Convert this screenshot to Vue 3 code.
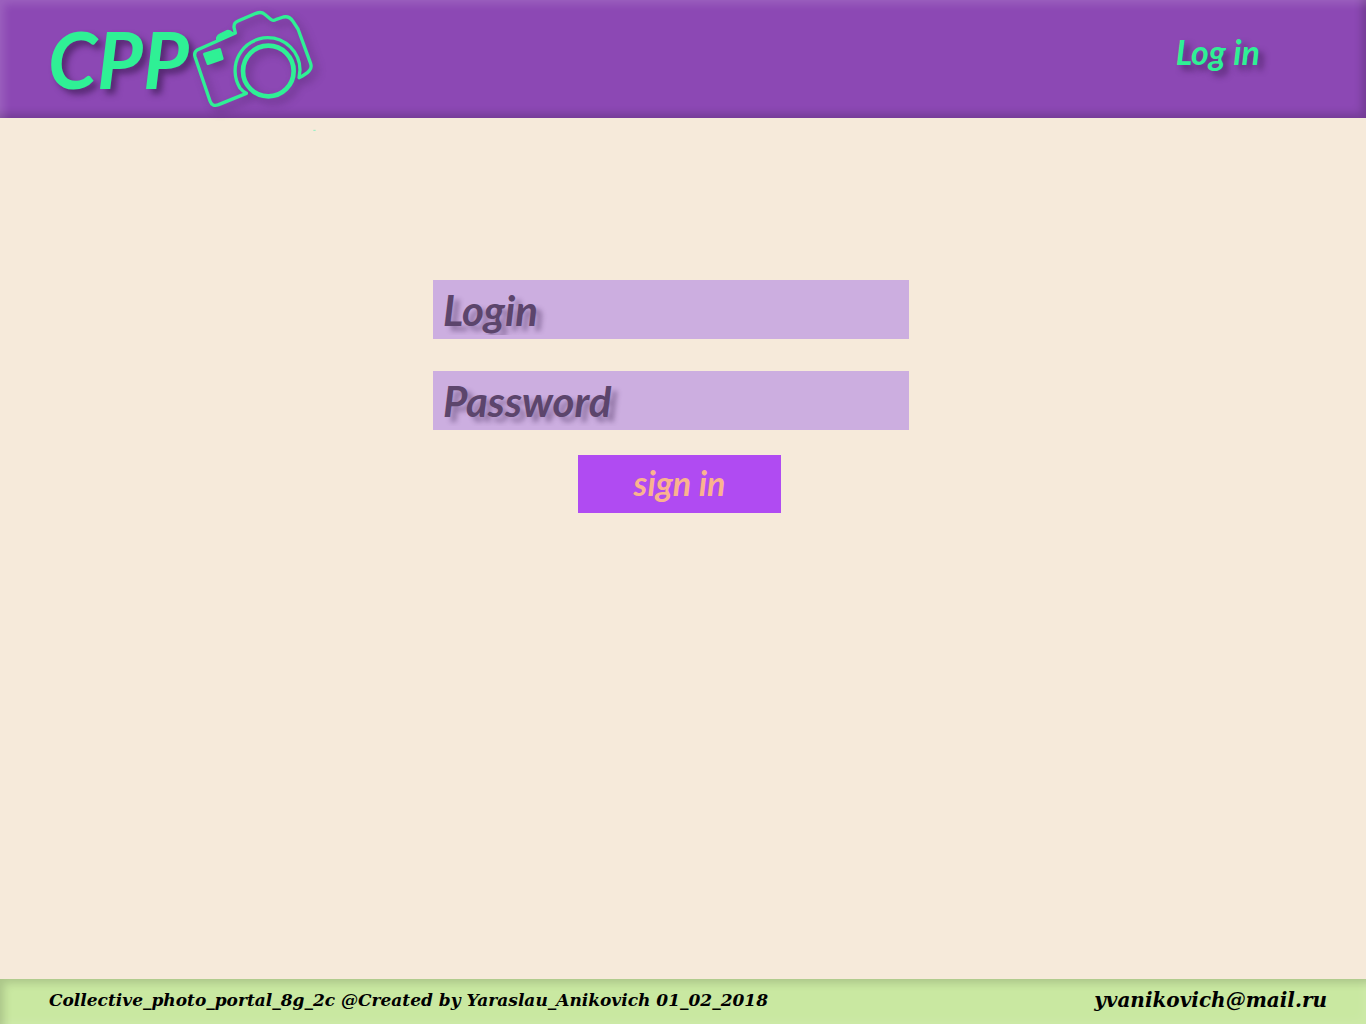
<script setup>
import { ref } from 'vue'

const login = ref('')
const password = ref('')
</script>

<template>
  <div class="page">
    <header class="header">
      <a class="brand" href="#" aria-label="CPP home">
        <span class="brand-name">CPP</span>
        <svg class="camera" viewBox="36 0 420 354" aria-hidden="true">
          <g class="camera-body">
            <g fill="none" stroke="#2ff095" stroke-linejoin="round" stroke-linecap="round">
              <path
                stroke-width="10"
                d="M199 280 L116 314 Q96 321 90 303 L45 170 Q41 156 53 149 L166 99 L162 82 Q161 68 174 63 L228 40 Q244 34 254 43 L272 58 Q279 64 289 58 L310 51 Q328 47 339 64 L354 87 L392 191 Q396 203 388 212 Q379 223 357 233 L360 210 A97 97 0 0 0 263 113 A99 99 0 0 0 180 264 Q188 274 199 280"
              />
              <circle cx="265" cy="213" r="76" stroke-width="14" />
            </g>
            <g fill="#2ff095" stroke="#2ff095" stroke-linejoin="round">
              <path stroke-width="4" d="M110 119 Q108 109 120 102 L141 92 Q148 90 158 98 Z" />
              <path stroke-width="8" d="M73 162 L119 148 L127 176 L84 191 Z" />
            </g>
          </g>
          <path stroke="#8ff0c2" stroke-width="3" d="M400 391 H407" />
        </svg>
      </a>
      <a class="login-link" href="#login">Log in</a>
    </header>

    <main class="main">
      <form id="login-form" class="form" @submit.prevent>
        <input
          id="login"
          v-model="login"
          class="field"
          type="text"
          placeholder="Login"
          aria-label="Login"
          autocomplete="username"
        />
        <input
          id="password"
          v-model="password"
          class="field"
          type="password"
          placeholder="Password"
          aria-label="Password"
          autocomplete="current-password"
        />
        <div class="actions">
          <button class="submit" type="submit">sign in</button>
        </div>
      </form>
    </main>

    <footer class="footer">
      <span class="credits">Collective_photo_portal_8g_2c @Created by Yaraslau_Anikovich 01_02_2018</span>
      <a class="email" href="mailto:yvanikovich@mail.ru">yvanikovich@mail.ru</a>
    </footer>
  </div>
</template>

<style>
body {
  margin: 0;
  background: #f6eada;
}
</style>

<style scoped>
.page {
  display: flex;
  flex-direction: column;
  min-height: 100vh;
  font-family: Lato, "Liberation Sans", sans-serif;
}

.header {
  position: relative;
  display: flex;
  align-items: center;
  justify-content: space-between;
  box-sizing: border-box;
  min-height: 118px;
  padding: 0 106px 0 48px;
  background: #8c48b4;
  box-shadow:
    inset 8px 8px 8px -4px rgba(255, 255, 255, 0.14),
    inset -8px -8px 8px -4px rgba(0, 0, 0, 0.18);
}

.brand {
  display: flex;
  align-items: center;
  gap: 4px;
  color: #2ff095;
  text-decoration: none;
}

.brand-name {
  width: 140px;
  font-size: 79px;
  font-style: italic;
  font-weight: 700;
  line-height: 118px;
  text-shadow: 5px 5px 6px rgba(50, 20, 70, 0.6);
}

.camera {
  display: block;
  width: 140px;
  height: 118px;
  overflow: visible;
}

.camera-body {
  filter: drop-shadow(14px 14px 12px rgba(50, 20, 70, 0.4));
}

.login-link {
  padding-bottom: 14px;
  color: #2ff095;
  font-size: 34px;
  font-style: italic;
  font-weight: 700;
  line-height: 40px;
  text-decoration: none;
  text-shadow: 5px 5px 6px rgba(50, 20, 70, 0.6);
}

.main {
  flex: 1;
  padding: 162px 24px 40px 0;
}

.form {
  display: flex;
  flex-direction: column;
  gap: 32px;
  max-width: 476px;
  margin: 0 auto;
}

.field {
  box-sizing: border-box;
  width: 100%;
  height: 59px;
  padding: 0 10px;
  border: 0;
  border-radius: 0;
  outline: 0;
  background: #ccaee0;
  color: #5c456c;
  font-family: inherit;
  font-size: 42px;
  font-style: italic;
  font-weight: 700;
  text-shadow: 6px 5px 5px rgba(60, 35, 80, 0.4);
}

.field::placeholder {
  color: #5c456c;
  line-height: 56px;
  opacity: 1;
}

.actions {
  display: flex;
  justify-content: center;
  margin-top: -7px;
  padding-left: 17px;
}

.submit {
  width: 203px;
  height: 58px;
  padding: 0 0 4px;
  border: 0;
  background: #b04bf2;
  color: #fab38f;
  font-family: inherit;
  font-size: 34px;
  font-style: italic;
  font-weight: 700;
  cursor: pointer;
}

.footer {
  display: flex;
  align-items: center;
  justify-content: space-between;
  box-sizing: border-box;
  min-height: 45px;
  padding: 0 39px 4px 49px;
  background: #c9e8a1;
  box-shadow:
    inset 8px 8px 8px -4px rgba(0, 0, 0, 0.15),
    inset -8px -8px 8px -4px rgba(255, 255, 255, 0.08);
  color: #000;
  font-family: "DejaVu Serif", serif;
  font-style: italic;
  font-weight: 700;
}

.credits {
  font-size: 17px;
}

.email {
  color: inherit;
  font-size: 20px;
  text-decoration: none;
}
</style>
